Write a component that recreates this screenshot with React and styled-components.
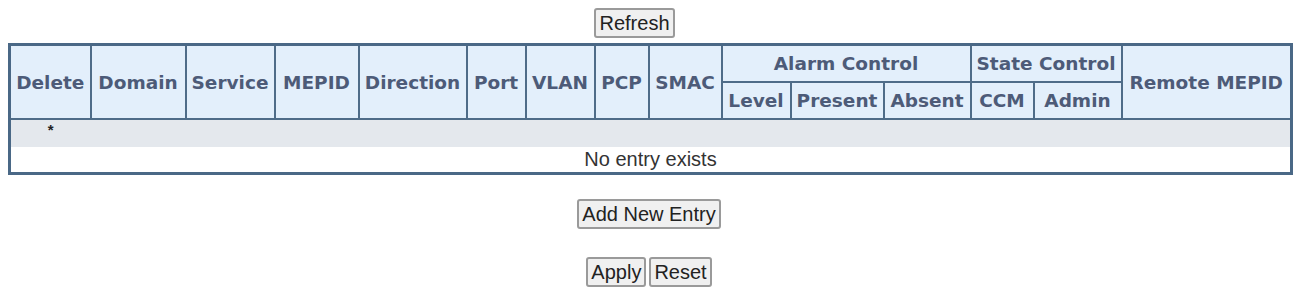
import React from 'react';
import styled, { createGlobalStyle } from 'styled-components';

const GlobalStyle = createGlobalStyle`
  body {
    margin: 0;
    background: #ffffff;
    font-family: 'Liberation Sans', Arial, sans-serif;
  }
`;

const Page = styled.div`
  padding: 8px 6px 8px 8px;
`;

const ButtonRow = styled.div`
  display: flex;
  justify-content: center;
  gap: 3px;
  padding-right: ${(p) => p.$shift || 0}px;
  margin-top: ${(p) => p.$top || 0}px;
`;

const Button = styled.button`
  font-family: 'Liberation Sans', Arial, sans-serif;
  font-size: 20px;
  line-height: 24px;
  color: #222;
  background: #f0f0f0;
  border: 2px solid #9a9a9a;
  border-radius: 3px;
  padding: 1px 3px;
  margin: 0;
`;

const Table = styled.table`
  margin-top: 5px;
  width: 1282px;
  table-layout: fixed;
  border-collapse: collapse;
  border: 3px solid #4a6886;
`;

const Th = styled.th`
  font-family: 'DejaVu Sans', Verdana, sans-serif;
  font-size: 18.5px;
  font-weight: bold;
  color: #4d5b78;
  background: #e3effb;
  border: 2px solid #4f6c88;
  padding: 0 2px;
  height: ${(p) => p.$h || 35}px;
  text-align: center;
  white-space: nowrap;
  overflow: hidden;
`;

const GrayRow = styled.tr`
  background: #e4e8ed;
  height: 28px;
`;

const Star = styled.td`
  text-align: center;
  vertical-align: top;
  font-size: 15px;
  line-height: 14px;
  padding-top: 3px;
  color: #222;
  font-weight: bold;
`;

const EmptyCell = styled.td`
  text-align: center;
  font-size: 20px;
  color: #333;
  height: 25px;
  padding: 0;
  background: #ffffff;
`;

const widths = [81, 95, 89, 84, 108, 59, 69, 54, 73, 69, 93, 87, 63, 88, 170];

export default function App() {
  return (
    <>
      <GlobalStyle />
      <Page>
        <ButtonRow $shift={29}>
          <Button>Refresh</Button>
        </ButtonRow>
        <Table>
          <colgroup>
            {widths.map((w, i) => (
              <col key={i} style={{ width: w }} />
            ))}
          </colgroup>
          <thead>
            <tr>
              <Th rowSpan={2}>Delete</Th>
              <Th rowSpan={2}>Domain</Th>
              <Th rowSpan={2}>Service</Th>
              <Th rowSpan={2}>MEPID</Th>
              <Th rowSpan={2}>Direction</Th>
              <Th rowSpan={2}>Port</Th>
              <Th rowSpan={2}>VLAN</Th>
              <Th rowSpan={2}>PCP</Th>
              <Th rowSpan={2}>SMAC</Th>
              <Th colSpan={3} $h={35}>Alarm Control</Th>
              <Th colSpan={2} $h={35}>State Control</Th>
              <Th rowSpan={2}>Remote MEPID</Th>
            </tr>
            <tr>
              <Th $h={35}>Level</Th>
              <Th $h={35}>Present</Th>
              <Th $h={35}>Absent</Th>
              <Th $h={35}>CCM</Th>
              <Th $h={35}>Admin</Th>
            </tr>
          </thead>
          <tbody>
            <GrayRow>
              <Star>*</Star>
              <td colSpan={14} />
            </GrayRow>
            <tr>
              <EmptyCell colSpan={15}>No entry exists</EmptyCell>
            </tr>
          </tbody>
        </Table>
        <ButtonRow $top={24}>
          <Button>Add New Entry</Button>
        </ButtonRow>
        <ButtonRow $top={28}>
          <Button>Apply</Button>
          <Button>Reset</Button>
        </ButtonRow>
      </Page>
    </>
  );
}
